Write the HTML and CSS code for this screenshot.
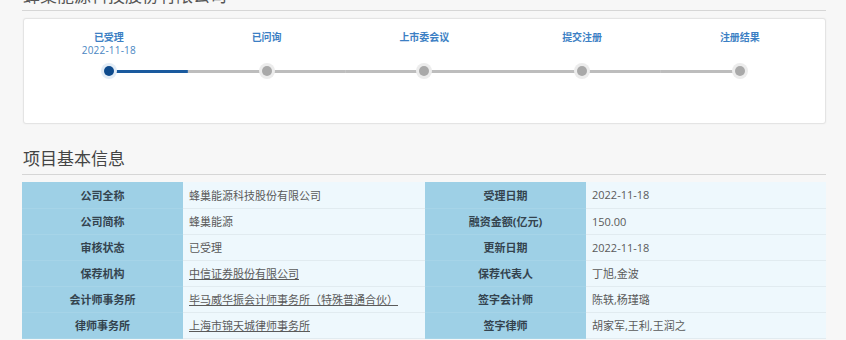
FILE: index.html
```html
<!DOCTYPE html>
<html lang="zh-CN">
<head>
<meta charset="utf-8">
<title>蜂巢能源科技股份有限公司</title>
<link rel="stylesheet" href="styles.css">
</head>
<body>
<div class="wrap">
  <h1 class="title">蜂巢能源科技股份有限公司</h1>
  <div class="card">
    <div class="steps">
      <div class="step done">
        <div class="label">已受理</div>
        <div class="date">2022-11-18</div>
        <div class="track first"><span class="dot active"></span></div>
      </div>
      <div class="step">
        <div class="label">已问询</div>
        <div class="date"></div>
        <div class="track"><span class="dot"></span></div>
      </div>
      <div class="step">
        <div class="label">上市委会议</div>
        <div class="date"></div>
        <div class="track"><span class="dot"></span></div>
      </div>
      <div class="step">
        <div class="label">提交注册</div>
        <div class="date"></div>
        <div class="track"><span class="dot"></span></div>
      </div>
      <div class="step">
        <div class="label">注册结果</div>
        <div class="date"></div>
        <div class="track last"><span class="dot"></span></div>
      </div>
    </div>
  </div>

  <h2 class="section">项目基本信息</h2>
  <table class="info">
    <colgroup>
      <col class="c1"><col class="c2"><col class="c3"><col class="c4">
    </colgroup>
    <tr>
      <th>公司全称</th><td>蜂巢能源科技股份有限公司</td>
      <th>受理日期</th><td>2022-11-18</td>
    </tr>
    <tr>
      <th>公司简称</th><td>蜂巢能源</td>
      <th>融资金额(亿元)</th><td>150.00</td>
    </tr>
    <tr>
      <th>审核状态</th><td>已受理</td>
      <th>更新日期</th><td>2022-11-18</td>
    </tr>
    <tr>
      <th>保荐机构</th><td><a href="#">中信证券股份有限公司</a></td>
      <th>保荐代表人</th><td>丁旭,金波</td>
    </tr>
    <tr>
      <th>会计师事务所</th><td><a href="#">毕马威华振会计师事务所（特殊普通合伙）</a></td>
      <th>签字会计师</th><td>陈轶,杨瑾璐</td>
    </tr>
    <tr>
      <th>律师事务所</th><td><a href="#">上海市锦天城律师事务所</a></td>
      <th>签字律师</th><td>胡家军,王利,王润之</td>
    </tr>
  </table>
</div>
</body>
</html>
```

FILE: styles.css
```css
html, body {
  margin: 0;
  padding: 0;
  background: #f7f7f7;
  font-family: "Open Sans", "Noto Sans CJK SC", sans-serif;
  color: #555;
}

.wrap {
  width: 804px;
  margin-left: 22px;
}

.title {
  margin: -15px 0 0 0;
  padding: 0 0 3px 1px;
  font-size: 17px;
  line-height: 22px;
  font-weight: normal;
  color: #555;
  border-bottom: 1px solid #d6d6d6;
}

.card {
  margin: 7px 0 0 1px;
  height: 104px;
  background: #fff;
  border: 1px solid #e4e4e4;
  border-radius: 3px;
  box-shadow: 0 0 2px rgba(0, 0, 0, 0.06);
  padding: 0 6px;
}

.steps {
  display: grid;
  grid-template-columns: repeat(5, 157.75px);
  padding-top: 12px;
}

.step {
  display: flex;
  flex-direction: column;
  align-items: center;
}

.label {
  font-size: 10px;
  line-height: 12px;
  height: 12px;
  color: #3c7fc4;
  font-weight: 600;
}

.date {
  margin-top: 1px;
  font-size: 10px;
  line-height: 12px;
  height: 12px;
  color: #4a86c2;
  letter-spacing: 0.2px;
}

.track {
  margin-top: 8px;
  width: 100%;
  height: 14px;
  display: flex;
  justify-content: center;
  align-items: center;
  background: linear-gradient(#bdbdbd, #bdbdbd) no-repeat center / 100% 3px;
}

.track.first {
  background: linear-gradient(to right, transparent 50%, #1a5a9e 50%) no-repeat center / 100% 3px;
}

.track.last {
  background: linear-gradient(to right, #bdbdbd 50%, transparent 50%) no-repeat center / 100% 3px;
}

.dot {
  width: 10px;
  height: 10px;
  border-radius: 50%;
  background: #a9a9a9;
  box-shadow: 0 0 0 3px #ececec;
}

.dot.active {
  background: #0e4a8c;
  box-shadow: 0 0 0 3px #e2ecf6;
}

.section {
  margin: 23px 0 0 0;
  padding: 0 0 3px 1px;
  font-size: 17px;
  line-height: 24px;
  font-weight: normal;
  color: #444;
  border-bottom: 1px solid #d6d6d6;
}

.info {
  margin-top: 7px;
  width: 804px;
  border-collapse: collapse;
  table-layout: fixed;
  font-size: 11px;
}

.c1 { width: 161px; }
.c2 { width: 242px; }
.c3 { width: 161px; }
.c4 { width: 240px; }

.info tr {
  height: 26px;
}

.info th {
  background: #9ed0e6;
  color: #34434e;
  font-weight: bold;
  text-align: center;
  padding: 0;
  border-bottom: 1px solid #a6d4e8;
}

.info td {
  background: #eef8fd;
  color: #5a5a5a;
  padding: 0 0 0 6px;
  border-bottom: 1px solid #e1ebf0;
  white-space: nowrap;
}

.info a {
  color: #5a5a5a;
  text-decoration: underline;
}
```
